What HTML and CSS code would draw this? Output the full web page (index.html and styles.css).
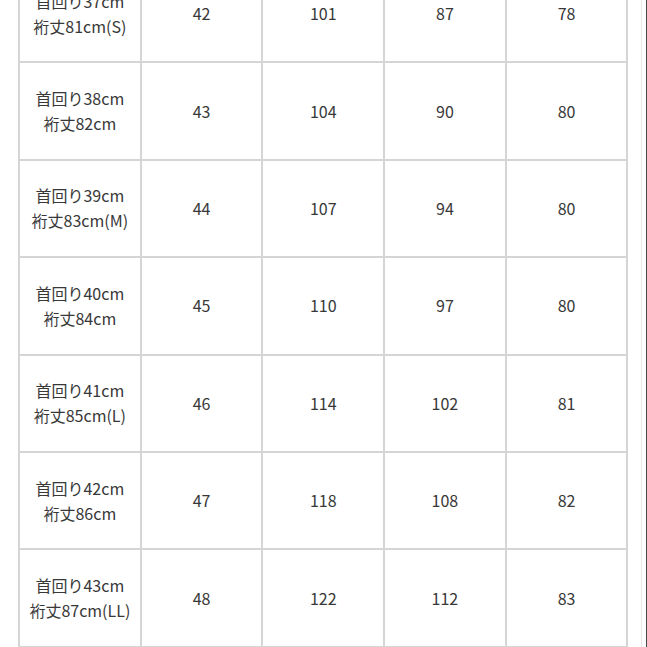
FILE: index.html
```html
<!DOCTYPE html>
<html lang="ja">
<head>
<meta charset="utf-8">
<link rel="stylesheet" href="styles.css">
</head>
<body>
<div class="viewport">
<div class="frame">
<table class="size-table">
<tbody>
<tr><td class="label">首回り37cm<br>裄丈81cm(S)</td><td>42</td><td>101</td><td>87</td><td>78</td></tr>
<tr><td class="label">首回り38cm<br>裄丈82cm</td><td>43</td><td>104</td><td>90</td><td>80</td></tr>
<tr><td class="label">首回り39cm<br>裄丈83cm(M)</td><td>44</td><td>107</td><td>94</td><td>80</td></tr>
<tr><td class="label">首回り40cm<br>裄丈84cm</td><td>45</td><td>110</td><td>97</td><td>80</td></tr>
<tr><td class="label">首回り41cm<br>裄丈85cm(L)</td><td>46</td><td>114</td><td>102</td><td>81</td></tr>
<tr><td class="label">首回り42cm<br>裄丈86cm</td><td>47</td><td>118</td><td>108</td><td>82</td></tr>
<tr><td class="label">首回り43cm<br>裄丈87cm(LL)</td><td>48</td><td>122</td><td>112</td><td>83</td></tr>
</tbody>
</table>
</div>
</div>
</body>
</html>
```

FILE: styles.css
```css
html, body {
  margin: 0;
  padding: 0;
  background: #ffffff;
  overflow: hidden;
}
body {
  font-family: "Noto Sans CJK JP", "Noto Sans", sans-serif;
  color: #383838;
  font-size: 16px;
}
.viewport {
  width: 647px;
  height: 647px;
  overflow: hidden;
  border-right: 1px solid #4a4a4a;
  box-sizing: border-box;
}
.frame {
  width: 642px;
  height: 700px;
  border-right: 1px solid #e8e8e8;
  padding-left: 18px;
  box-sizing: border-box;
  margin-top: -36px;
}
.size-table {
  border-collapse: collapse;
  border: 2px solid #d5d5d5;
}
.size-table td {
  border: 2px solid #d5d5d5;
  width: 119.7px;
  height: 95.4px;
  padding: 0;
  text-align: center;
  vertical-align: middle;
  line-height: 25px;
}
```
